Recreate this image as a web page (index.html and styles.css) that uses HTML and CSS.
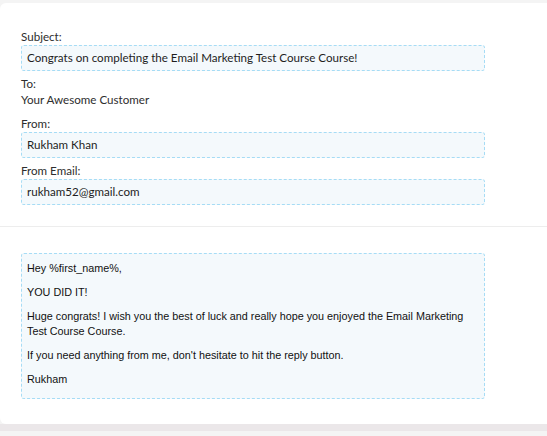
FILE: index.html
```html
<!DOCTYPE html>
<html>
<head>
<meta charset="utf-8">
<link rel="stylesheet" href="styles.css">
</head>
<body>
<div class="page">
  <div class="card">
    <div class="meta">
      <div class="group">
        <div class="label">Subject:</div>
        <div class="field">Congrats on completing the Email Marketing Test Course Course!</div>
      </div>
      <div class="group group-to">
        <div class="label">To:</div>
        <div class="value">Your Awesome Customer</div>
      </div>
      <div class="group">
        <div class="label">From:</div>
        <div class="field">Rukham Khan</div>
      </div>
      <div class="group">
        <div class="label">From Email:</div>
        <div class="field">rukham52@gmail.com</div>
      </div>
    </div>
    <div class="content">
      <div class="body-box">
        <p>Hey %first_name%,</p>
        <p>YOU DID IT!</p>
        <p>Huge congrats! I wish you the best of luck and really hope you enjoyed the Email Marketing Test Course Course.</p>
        <p>If you need anything from me, don't hesitate to hit the reply button.</p>
        <p>Rukham</p>
      </div>
    </div>
  </div>
  <div class="footer-band"></div>
</div>
</body>
</html>
```
FILE: styles.css
```css
html, body {
  margin: 0;
  padding: 0;
  background: #f4f4f4;
  overflow: hidden;
}
.page {
  width: 547px;
  height: 436px;
  padding-top: 3px;
  box-sizing: border-box;
  background: #f4f4f4;
}
.card {
  background: #ffffff;
  border-radius: 6px 0 0 6px;
  height: 421px;
  box-sizing: border-box;
}
.meta {
  padding: 26px 0 21px 21px;
  border-bottom: 1px solid #ededed;
  font-family: "Lato", "Liberation Sans", sans-serif;
  font-size: 11.6px;
  color: #2e2e2e;
}
.group {
  margin-bottom: 5px;
}
.group:last-child {
  margin-bottom: 0;
}
.group-to {
  margin-bottom: 8px;
}
.label, .value {
  line-height: 16px;
}
.field {
  width: 464px;
  box-sizing: border-box;
  height: 26px;
  line-height: 24px;
  padding: 0 5px;
  background: #f4f9fc;
  border: 1px dashed #a6dcf5;
  border-radius: 3px;
  color: #1e1e1e;
}
.content {
  padding: 26px 0 0 21px;
}
.body-box {
  width: 464px;
  box-sizing: border-box;
  height: 146px;
  padding: 7px 5px 2px;
  background: #f4f9fc;
  border: 1px dashed #a6dcf5;
  border-radius: 3px;
  font-family: "Liberation Sans", Arial, sans-serif;
  font-size: 10.8px;
  line-height: 15px;
  color: #111;
}
.body-box p {
  margin: 0 0 9px;
}
.footer-band {
  height: 7px;
  background: #ebe7e9;
}
```
